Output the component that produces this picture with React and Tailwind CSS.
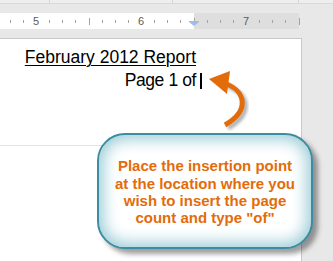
const ticks = [];
for (let k = -2; k <= 20; k++) {
  if (k % 8 === 0) continue;
  const x = Math.round(36 + k * 13.125) + 0.5;
  const long = k % 4 === 0;
  ticks.push({ x, long });
}

const labels = [
  { x: 36, text: '5' },
  { x: 141, text: '6' },
  { x: 246, text: '7' },
];

const Ruler = () => (
  <div className="relative mt-[9px] flex h-[16px]">
    <div className="w-[194px] bg-white" />
    <div className="w-[105px] bg-[#dedede]" />
    <svg className="absolute left-0 top-0" width="333" height="16">
      {ticks.map((t) => (
        <line
          key={t.x}
          x1={t.x}
          x2={t.x}
          y1={t.long ? 5 : 7}
          y2={t.long ? 12 : 10}
          stroke="#a3a3a3"
          strokeWidth="1"
        />
      ))}
      {labels.map((l) => (
        <text
          key={l.text}
          x={l.x}
          y="12"
          textAnchor="middle"
          fontSize="11"
          fill="#5b5b5b"
          fontFamily="'Liberation Sans', Arial, sans-serif"
        >
          {l.text}
        </text>
      ))}
      <polygon points="189,8 199,8 199,9 194,13 189,9" fill="#9dbce8" />
    </svg>
  </div>
);

const Arrow = () => (
  <svg className="pointer-events-none absolute left-0 top-0" width="333" height="261">
    <defs>
      <filter id="blur" x="-20%" y="-20%" width="140%" height="140%">
        <feGaussianBlur stdDeviation="1.5" />
      </filter>
    </defs>
    <g transform="translate(3 3)" filter="url(#blur)" opacity="0.45">
      <path d="M224 83 C245 90 251 110 225 125" fill="none" stroke="#555" strokeWidth="5" />
    </g>
    <path d="M224 83 C245 90 251 110 225 125" fill="none" stroke="#e36c0a" strokeWidth="5" />
    <polygon points="209,79 230,71 227,94" fill="#e36c0a" />
  </svg>
);

export default function App() {
  return (
    <div
      className="relative flex h-[261px] w-[333px] flex-col overflow-hidden bg-[#e8e8e8]"
      style={{ fontFamily: "'Liberation Sans', Arial, sans-serif" }}
    >
      <div className="flex h-[4px] border-b border-[#d9d9d9] bg-[#eeeeee]">
        <div className="w-[50px] border-r border-[#d6d6d6]" />
        <div className="w-[123px] border-r border-[#d6d6d6]" />
        <div className="w-[126px] border-r border-[#d6d6d6]" />
      </div>

      <Ruler />

      <div className="mt-[9px] flex w-[302px] flex-1 flex-col border-r border-t border-[#c8c8c8] bg-white">
        <div className="h-[107px] border-b border-[#e2e2e2]">
          <div className="flex w-[196px] flex-col items-end pt-[7px] text-[17.5px] leading-[23px] text-black">
            <span className="underline decoration-1 underline-offset-2">February 2012 Report</span>
            <div className="flex items-center">
              <span className="tracking-[-0.4px]">Page 1 of</span>
              <span className="ml-[4px] mr-[-6px] h-[16px] w-[2px] bg-black" />
            </div>
          </div>
        </div>
      </div>

      <Arrow />

      <div className="absolute left-[97px] top-[133px] flex h-[116px] w-[216px] items-center justify-center rounded-[28px] border-2 border-[#3b8da2] bg-white pt-[2px] text-center shadow-[inset_0_0_16px_4px_#98cbd6,5px_5px_5px_rgba(0,0,0,0.38)]">
        <p className="text-[15px] font-bold leading-[17.3px] text-[#e36c0a]">
          Place the insertion point
          <br />
          at the location where you
          <br />
          wish to insert the page
          <br />
          count and type "of"
        </p>
      </div>
    </div>
  );
}
